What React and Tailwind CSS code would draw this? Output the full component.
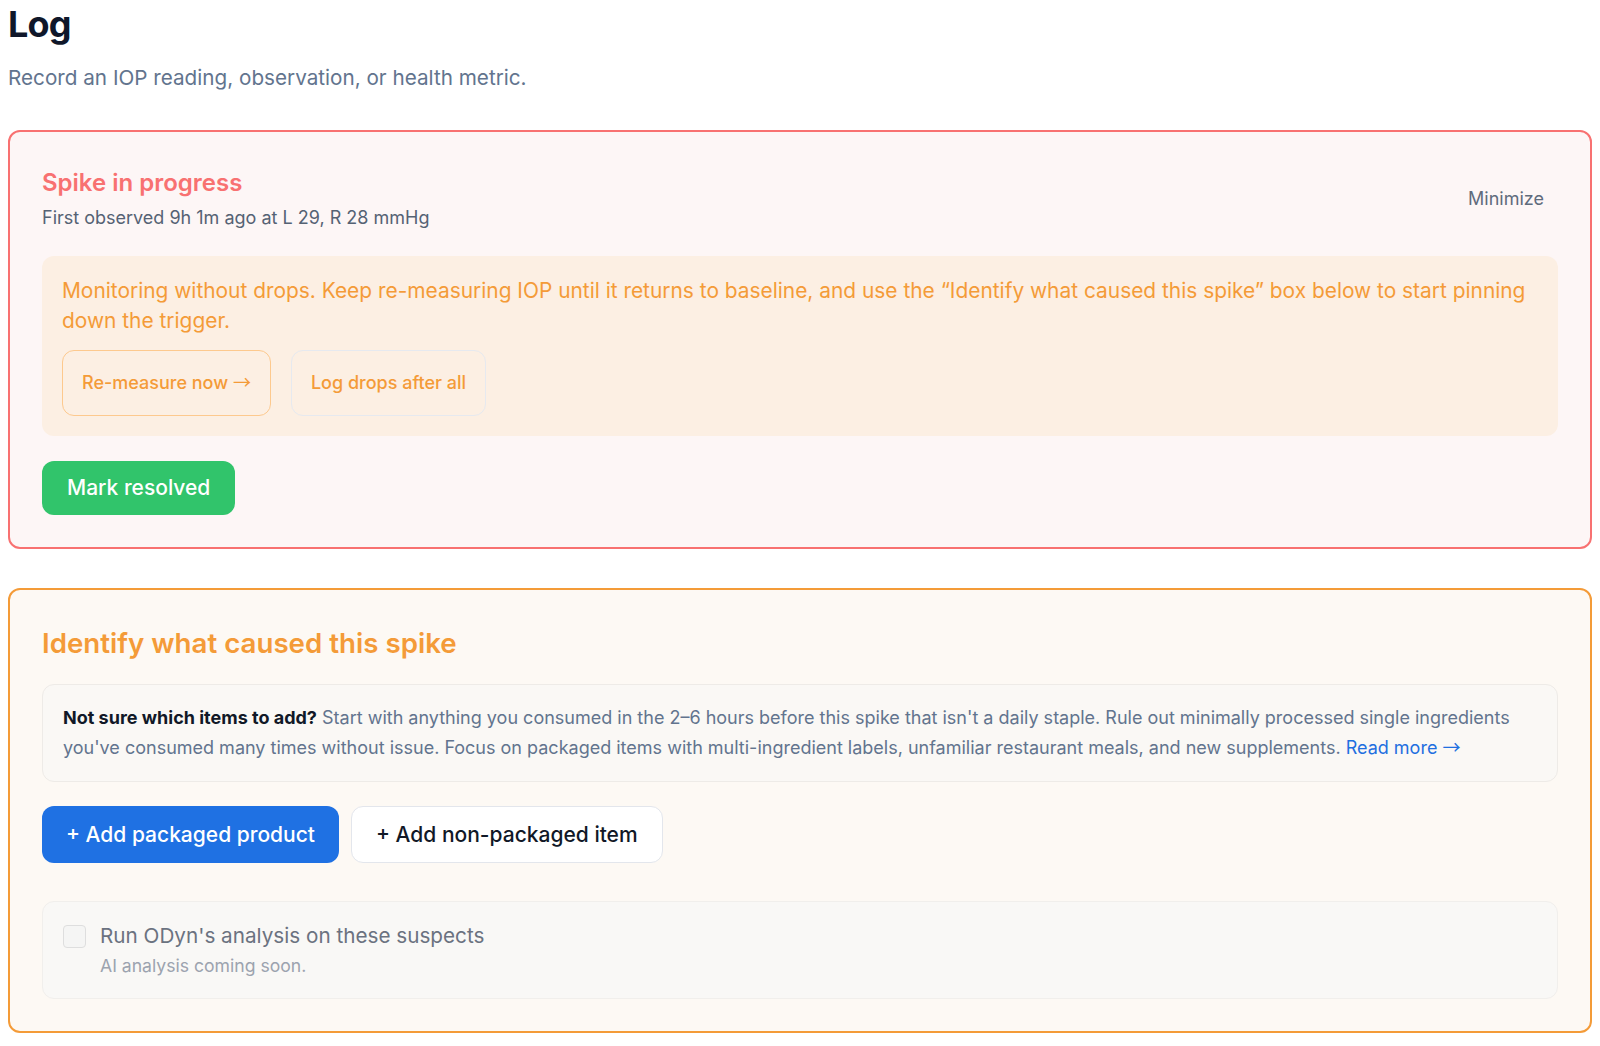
export default function App() {
  const arrow = (
    <span className="font-['Noto_Sans_CJK_SC',sans-serif] font-normal leading-none">→</span>
  );

  return (
    <div className="min-h-screen bg-white px-2 pt-1 pb-2 font-['Inter',sans-serif]">
      <h1 className="text-4xl font-bold tracking-tight text-[#0f172a]">Log</h1>
      <p className="mt-5 text-[20.7px] leading-7 text-slate-500">
        Record an IOP reading, observation, or health metric.
      </p>

      {/* active spike */}
      <section className="mt-[38px] rounded-xl border-2 border-[#f87171] bg-[#fdf6f6] p-8">
        <div className="flex items-center justify-between pt-[2px]">
          <div>
            <h2 className="text-2xl font-semibold leading-[34px] text-[#f87171]">Spike in progress</h2>
            <p className="mt-1 text-lg leading-7 text-[#556274]">
              First observed 9h 1m ago at L 29, R 28 mmHg
            </p>
          </div>
          <button type="button" className="py-1.5 pl-3 pr-[14px] text-lg text-[#5f6b7c]">
            Minimize
          </button>
        </div>

        <div className="mt-6 rounded-xl bg-[#fcefe3] p-5">
          <p className="text-[20.9px] leading-[30px] text-[#f49b38]">
            Monitoring without drops. Keep re-measuring IOP until it returns to baseline, and use the
            “Identify what caused this spike” box below to start pinning down the trigger.
          </p>
          <div className="mt-[14px] flex gap-5">
            <button
              type="button"
              className="h-[66px] rounded-xl border border-[#fdc98e] px-[19px] text-lg font-medium leading-7 text-[#f49b38]"
            >
              Re-measure now {arrow}
            </button>
            <button
              type="button"
              className="h-[66px] rounded-xl border border-[#e6e9ef] px-[19px] text-lg font-medium leading-7 text-[#f49b38]"
            >
              Log drops after all
            </button>
          </div>
        </div>

        <button
          type="button"
          className="mt-[25px] flex h-[54px] items-center rounded-xl bg-[#31c46b] px-[25px] text-[21px] font-medium text-white"
        >
          Mark resolved
        </button>
      </section>

      {/* suspects */}
      <section className="mt-[39px] rounded-xl border-2 border-[#f49b38] bg-[#fdf9f4] p-8">
        <h2 className="text-[27.7px] font-semibold leading-[42px] text-[#f49b38]">
          Identify what caused this spike
        </h2>

        <div className="mt-5 rounded-xl border border-[#eeebe7] bg-[#faf8f5] px-5 py-[18px] text-[18px] leading-[30px] text-slate-500">
          <span className="font-bold text-[#111827]">Not sure which items to add?</span> Start with
          anything you consumed in the 2–6 hours before this spike that isn't a daily staple. Rule
          out minimally processed single ingredients you've consumed many times without issue. Focus
          on packaged items with multi-ingredient labels, unfamiliar restaurant meals, and new
          supplements. <span className="text-[#1f6fe0]">Read more {arrow}</span>
        </div>

        <div className="mt-6 flex gap-3">
          <button
            type="button"
            className="flex h-[57px] items-center rounded-xl bg-[#1f71e3] px-6 text-[21px] font-medium text-white"
          >
            + Add packaged product
          </button>
          <button
            type="button"
            className="flex h-[57px] items-center rounded-xl border border-[#e3e6ec] bg-white px-6 text-[21px] font-medium text-[#111827]"
          >
            + Add non-packaged item
          </button>
        </div>

        <div className="mt-[38px] rounded-xl border border-[#f1efec] bg-[#f9f8f6] p-5">
          <label className="flex items-center gap-3.5">
            <span className="h-[23px] w-[23px] rounded border border-[#dedede] bg-[#f5f5f4]" />
            <span className="text-[20.7px] leading-7 text-[#6b7280]">
              Run ODyn's analysis on these suspects
            </span>
          </label>
          <p className="mt-1 pl-[37px] text-[17.6px] leading-6 text-[#9ca3af]">
            AI analysis coming soon.
          </p>
        </div>
      </section>
    </div>
  );
}
